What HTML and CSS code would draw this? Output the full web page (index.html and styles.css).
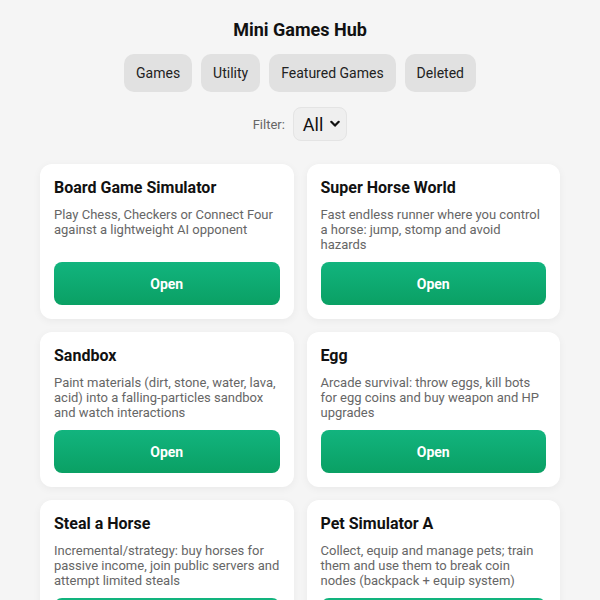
FILE: index.html
```html
<!DOCTYPE html>
<html>
<head>
<meta name="viewport" content="width=device-width, initial-scale=1">
<title>Mini Games Hub</title>
<link rel="stylesheet" href="styles.css">
</head>
<body>
<div class="hub">
  <h1 class="title">Mini Games Hub</h1>

  <div class="tabs">
    <button class="tab">Games</button>
    <button class="tab">Utility</button>
    <button class="tab">Featured Games</button>
    <button class="tab">Deleted</button>
  </div>

  <div class="filter">
    <label for="filter">Filter:</label>
    <div class="select">
      <span>All</span>
      <svg width="10" height="8" viewBox="0 0 10 8"><path d="M1.3 1.8 L5 5.6 L8.7 1.8" fill="none" stroke="#111" stroke-width="2.2" stroke-linecap="round" stroke-linejoin="round"/></svg>
    </div>
  </div>

  <div class="grid">
    <div class="card">
      <h2>Board Game Simulator</h2>
      <p>Play Chess, Checkers or Connect Four against a lightweight AI opponent</p>
      <button class="open">Open</button>
    </div>
    <div class="card">
      <h2>Super Horse World</h2>
      <p>Fast endless runner where you control a horse: jump, stomp and avoid hazards</p>
      <button class="open">Open</button>
    </div>
    <div class="card">
      <h2>Sandbox</h2>
      <p>Paint materials (dirt, stone, water, lava, acid) into a falling-particles sandbox and watch interactions</p>
      <button class="open">Open</button>
    </div>
    <div class="card">
      <h2>Egg</h2>
      <p>Arcade survival: throw eggs, kill bots for egg coins and buy weapon and HP upgrades</p>
      <button class="open">Open</button>
    </div>
    <div class="card">
      <h2>Steal a Horse</h2>
      <p>Incremental/strategy: buy horses for passive income, join public servers and attempt limited steals</p>
      <button class="open">Open</button>
    </div>
    <div class="card">
      <h2>Pet Simulator A</h2>
      <p>Collect, equip and manage pets; train them and use them to break coin nodes (backpack + equip system)</p>
      <button class="open">Open</button>
    </div>
  </div>
</div>
</body>
</html>
```

FILE: styles.css
```css
body {
  margin: 0;
  background-color: #f5f5f5;
  font-family: Roboto, "Liberation Sans", Arial, sans-serif;
  color: #111;
}

.hub {
  width: 520px;
  margin: 0 auto;
  padding-top: 19px;
}

.title {
  margin: 0;
  font-size: 18px;
  line-height: 22px;
  font-weight: 700;
  text-align: center;
}

.tabs {
  display: flex;
  justify-content: center;
  gap: 9px;
  margin-top: 13px;
}

.tab {
  height: 38px;
  padding: 0 12px;
  border: none;
  border-radius: 10px;
  background-color: #e1e1e1;
  color: #222;
  font-family: inherit;
  font-size: 14px;
}

.filter {
  display: flex;
  justify-content: center;
  align-items: center;
  gap: 8px;
  margin-top: 15px;
  font-size: 13px;
  color: #666;
}

.select {
  display: flex;
  align-items: center;
  gap: 7px;
  height: 32px;
  padding: 0 6px 0 9px;
  border: 1px solid #e4e4e4;
  border-radius: 8px;
  background-color: #efefef;
  color: #111;
  font-size: 18px;
}

.grid {
  display: grid;
  grid-template-columns: 1fr 1fr;
  gap: 13px;
  margin-top: 23px;
}

.card {
  display: flex;
  flex-direction: column;
  padding: 14px;
  background-color: #fff;
  border-radius: 12px;
  box-shadow: 0 2px 8px rgba(0, 0, 0, 0.05);
}

.card h2 {
  margin: 0;
  font-size: 16px;
  line-height: 20px;
  font-weight: 700;
  color: #111;
}

.card p {
  margin: 9px 0 10px 0;
  font-size: 13px;
  line-height: 15px;
  color: #666;
}

.open {
  margin-top: auto;
  height: 43px;
  border: none;
  border-radius: 8px;
  background: linear-gradient(#12b47e, #0aa064);
  color: #fff;
  font-family: inherit;
  font-size: 14px;
  font-weight: 700;
}
```
